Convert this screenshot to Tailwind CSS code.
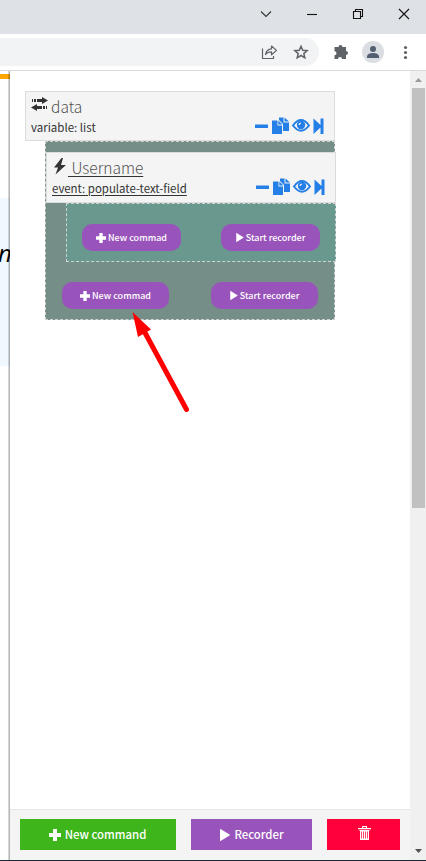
<!DOCTYPE html>
<html lang="en">
<head>
<meta charset="utf-8">
<title>Recorder panel</title>
<script src="https://cdn.jsdelivr.net/npm/@tailwindcss/browser@4"></script>
</head>
<body class="w-[426px] h-[861px] overflow-hidden bg-white font-['Noto_Sans_CJK_SC','Open_Sans',sans-serif] text-[#333]">
<svg class="hidden">
  <symbol id="plus" viewBox="0 0 12 12"><path fill="currentColor" d="M4 0h4v4h4v4H8v4H4V8H0V4h4z"/></symbol>
  <symbol id="play" viewBox="0 0 10 12"><path fill="currentColor" d="M0 0.3Q0-.1.5.1L9.6 5.6Q10 6 9.6 6.4L.5 11.9Q0 12.1 0 11.7z"/></symbol>
  <symbol id="tools" viewBox="0 0 72 18">
    <g fill="#247fe6">
      <path d="M1 7.500h13v3.500H1z"/>
      <path d="M18 3.500h5.500V8.500H28v8.500H18z"/><path d="M24.300 3.500l4 4h-4z"/>
      <path d="M25 .5h4.500V5.500H35V14h-6V7L25 3z"/><path d="M30.500 .5l4.500 4h-4.500z"/>
      <path fill="none" stroke="#247fe6" stroke-width="2" d="M39 8.500Q47 -2.500 55 8.500Q47 19 39 8.500z"/>
      <circle cx="47" cy="8" r="4.200"/>
      <path fill="#f4f4f4" d="M44.500 8q0-2.200 2.300-2.500v1.500q-1.100.2-1.100 1z"/>
      <path d="M59.500 1.500l7 6.500V1.500h3V17h-3v-6.500l-7 6.500z"/>
    </g>
  </symbol>
</svg>
<div class="flex flex-col h-full">
  <header class="h-[34px] bg-[#dee1e6] flex justify-end shrink-0">
    <svg class="w-[200px] h-[34px]" viewBox="226 0 200 34" fill="none" stroke="#111" stroke-width="1.1">
      <path stroke="#333" d="M261 11.500l5 5 5-5"/>
      <path d="M307 14.500h10"/>
      <path d="M353.500 11.500h7v7h-7zM355.500 11.500v-2h7v7h-2"/>
      <path d="M399 9l10 10M409 9l-10 10"/>
    </svg>
  </header>
  <div class="h-[37px] border-b border-[#d9dadc] flex items-center shrink-0">
    <div class="w-[319px] h-7 bg-[#f1f3f4] rounded-r-full flex justify-end">
      <svg class="w-[93px] h-7" viewBox="226 38 93 28" fill="none" stroke="#5f6368" stroke-width="1.200">
        <path d="M262.500 48.500v10h11V56"/>
        <path stroke-linejoin="round" d="M265.500 54.500q1-5.500 6-5.700V46l5 4.400-5 4.400v-3q-4 0-6 2.700z"/>
        <path stroke-width="1.500" d="M301 46.300l1.750 4 4.350.4-3.300 2.900 1 4.200-3.800-2.300-3.800 2.300 1-4.200-3.300-2.900 4.350-.4z"/>
      </svg>
    </div>
    <svg class="w-[107px] h-9" viewBox="319 34 107 36">
      <path fill="#5f6368" d="M334.500 47h4a2 2 0 0 1 4 0h3.500v3.900a2 2 0 0 1 0 4V59h-4a2 2 0 0 0-4 0h-3.500v-3.700a2 2 0 0 0 0-4z"/>
      <circle cx="373" cy="52" r="11" fill="#dadde2"/>
      <circle cx="373" cy="49" r="3" fill="#535e73"/><path fill="#535e73" d="M367 58v-2q1-3 6-3t6 3v2z"/>
      <g fill="#5f6368"><circle cx="405.500" cy="47.500" r="1.600"/><circle cx="405.500" cy="52.500" r="1.600"/><circle cx="405.500" cy="57.500" r="1.600"/></g>
    </svg>
  </div>
  <main class="flex h-[789px] shrink-0">
    <div class="w-[10px] shrink-0 overflow-hidden relative">
      <div class="h-[3px]"></div>
      <div class="h-[5px] bg-[#ffa500]"></div>
      <div class="h-[119px]"></div>
      <div class="h-[168px] bg-[#eff7ff] pt-[39px]"><div class="text-[24px] leading-[32px] italic text-black font-['Open_Sans'] -ml-[2px]">n</div></div>
      <div class="absolute inset-y-0 right-0 w-[2px] bg-linear-to-r from-black/10 to-black/35"></div>
    </div>
    <section class="w-[400px] flex flex-col shrink-0">
      <div class="h-[738px] pt-5 pl-[15px]">
        <div class="w-[310px] h-[50px] border border-[#dcdcdc] bg-[#f4f4f4] flex justify-between">
          <div class="pl-[5px]">
            <div class="flex items-start h-[27px] gap-[3px]">
              <svg class="w-[17px] h-[15px] mt-[5px]" viewBox="0 0 17 15" fill="#333"><path d="M1 2h1v3H1zM3 2h2v3H3zM6 2h5V0l6 3.500-6 3.500V5H6zM16 9h-1v3h1zM14 9h-2v3h2zM11 9H6V7L0 10.500 6 14v-2h5z"/></svg>
              <span class="text-[15.500px] leading-[29px] font-light text-[#505050]">data</span>
            </div>
            <div class="text-[11.500px] leading-[17px] whitespace-nowrap">variable: list</div>
          </div>
          <svg class="w-[72px] h-[18px] mt-[25px] mr-[8px]"><use href="#tools"/></svg>
        </div>
        <div class="ml-5 w-[290px] h-[179px] bg-[#758e88] border border-dashed border-[#d0d5d4] pt-[10px]">
          <div class="w-[290px] h-[51px] border border-[#dcdcdc] bg-[#f4f4f4] flex justify-between">
            <div class="pl-[5px]">
              <div class="flex items-start h-[27px]">
                <svg class="w-[16px] h-[17px] mt-[5px] shrink-0" viewBox="0 0 16 17" fill="#333"><path d="M9.500 0L2 9.500h4L3.500 16.500 14 7H9L11 0z"/></svg>
                <span class="text-[15.500px] leading-[29px] font-light text-[#505050] underline decoration-1 underline-offset-2 decoration-[#333] whitespace-pre"> Username</span>
              </div>
              <div class="text-[11.430px] leading-[16px] whitespace-nowrap underline underline-offset-2">event: populate-text-field</div>
            </div>
            <svg class="w-[72px] h-[18px] mt-[25px] mr-[8px] shrink-0"><use href="#tools"/></svg>
          </div>
          <div class="ml-5 w-[270px] h-[59px] bg-[#69998e] border border-dashed border-[#d0d5d4] pl-[15px] pr-[15px] pt-[20px] flex justify-between text-white text-[9px] leading-[14px]">
            <div class="w-[99px] h-[27px] rounded-[10px] bg-[#9954bb] flex justify-center items-center gap-[2px] font-medium whitespace-nowrap"><svg class="w-[10px] h-[10px] shrink-0"><use href="#plus"/></svg><span>New commad</span></div>
            <div class="w-[99px] h-[27px] rounded-[10px] bg-[#9954bb] flex justify-center items-center gap-[2px] font-medium whitespace-nowrap"><svg class="w-[8px] h-[9px] shrink-0"><use href="#play"/></svg><span>Start recorder</span></div>
          </div>
          <div class="pt-[20px] pl-[16px] pr-[16px] flex justify-between text-white text-[9px] leading-[14px]">
            <div class="w-[107px] h-[27px] rounded-[10px] bg-[#9954bb] flex justify-center items-center gap-[2px] font-medium whitespace-nowrap"><svg class="w-[10px] h-[10px] shrink-0"><use href="#plus"/></svg><span>New commad</span></div>
            <div class="w-[107px] h-[27px] rounded-[10px] bg-[#9954bb] flex justify-center items-center gap-[2px] font-medium whitespace-nowrap"><svg class="w-[8px] h-[9px] shrink-0"><use href="#play"/></svg><span>Start recorder</span></div>
          </div>
        </div>
      </div>
      <footer class="h-[51px] border-t border-[#e5e5e5] bg-[#f4f4f4] flex gap-[15px] pl-[10px] pt-[9px] text-white text-[11.400px] font-medium">
        <div class="w-[156px] h-[31px] bg-[#3eb51a] flex items-center justify-center gap-[4px] pr-px"><svg class="w-[12px] h-[12px]"><use href="#plus"/></svg><span>New command</span></div>
        <div class="w-[121px] h-[31px] bg-[#9954bb] flex items-center justify-center gap-[4px] pl-px"><svg class="w-[10px] h-[12px]"><use href="#play"/></svg><span>Recorder</span></div>
        <div class="w-[73px] h-[31px] bg-[#ff003b] flex items-start justify-center pt-[7px]">
          <svg class="w-[13px] h-[15px] ml-[2px]" viewBox="0 0 13 15" fill="#fff"><path fill-rule="evenodd" d="M4 0h5v2h4v1.300H0V2h4zM5.200 1.100V2h2.600v-.9zM1.500 4h10v1h-.5v9H2V5h-.5zM3.300 5.500v7h.7v-7zM5.300 5.500v7h.7v-7zM7.300 5.500v7H8v-7zM9.200 5.500v7h.7v-7z"/></svg>
        </div>
      </footer>
    </section>
    <aside class="w-4 bg-[#f0f0f0] flex flex-col items-center">
      <svg class="w-4 h-[17px] shrink-0" viewBox="0 0 16 17"><path fill="#9a9a9a" d="M5 11l3.500-4 3.500 4z"/></svg>
      <div class="w-[13px] h-[420px] bg-[#c1c1c1] ml-px"></div>
      <div class="flex-1"></div>
      <svg class="w-4 h-[17px] shrink-0" viewBox="0 0 16 17"><path fill="#505050" d="M5 6h7l-3.500 4z"/></svg>
    </aside>
  </main>
  <div class="h-px bg-[#1d2637] shrink-0"></div>
</div>
<svg class="absolute left-[120px] top-[300px] w-20 h-[120px]" viewBox="120 300 80 120"><path stroke="#f00" stroke-width="5" stroke-linecap="round" d="M143 329l43.500 80.500"/><path fill="#f00" d="M132.500 312l18.500 17.500-13 7.500z"/></svg>
</body>
</html>
